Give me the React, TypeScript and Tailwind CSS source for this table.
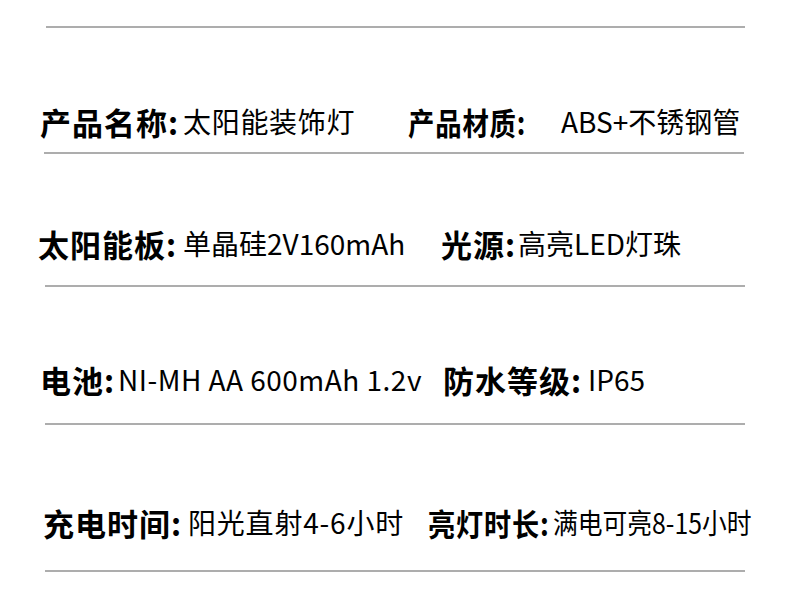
import React from 'react';

interface Spec {
  label: string;
  value: string;
  labelW: string;
  labelCls?: string;
  valueCls: string;
}

interface Row {
  left: Spec;
  right: Spec;
  pad: string;
  leftW: string;
  top: string;
  line: string;
}

const font = { fontFamily: '"Noto Sans CJK SC", "Noto Sans", sans-serif' };

const Item: React.FC<{ spec: Spec; className?: string }> = ({ spec, className }) => (
  <div className={`flex items-center whitespace-nowrap text-black shrink-0 ${className ?? ''}`}>
    <span className={`text-[31px] font-bold leading-none tracking-[1px] shrink-0 ${spec.labelW}`}>
      <span className={`inline-block origin-left ${spec.labelCls ?? ''}`}>{spec.label}</span>
    </span>
    <span className={`text-[28px] leading-none font-normal inline-block ${spec.valueCls}`}>{spec.value}</span>
  </div>
);

export default function App() {
  const rows: Row[] = [
    {
      left: { label: '产品名称:', value: '太阳能装饰灯', labelW: 'w-[143px]', valueCls: 'tracking-[0.7px]' },
      right: {
        label: '产品材质:',
        value: 'ABS+不锈钢管',
        labelW: 'w-[153px]',
        labelCls: 'scale-x-[0.85]',
        valueCls: '',
      },
      pad: 'pl-[40px]',
      leftW: 'w-[368px]',
      top: 'mt-[73px]',
      line: 'mt-[11px] ml-[44px]',
    },
    {
      left: { label: '太阳能板:', value: '单晶硅2V160mAh', labelW: 'w-[145px]', valueCls: '' },
      right: { label: '光源:', value: '高亮LED灯珠', labelW: 'w-[77px]', valueCls: '' },
      pad: 'pl-[38px]',
      leftW: 'w-[403px]',
      top: 'mt-[69px]',
      line: 'mt-[22px] ml-[45px]',
    },
    {
      left: { label: '电池:', value: 'NI-MH AA 600mAh 1.2v', labelW: 'w-[78px]', valueCls: 'tracking-[0.5px]' },
      right: { label: '防水等级:', value: 'IP65', labelW: 'w-[145px]', valueCls: '' },
      pad: 'pl-[40px]',
      leftW: 'w-[403px]',
      top: 'mt-[72px]',
      line: 'mt-[24px] ml-[45px]',
    },
    {
      left: { label: '充电时间:', value: '阳光直射4-6小时', labelW: 'w-[145px]', valueCls: 'tracking-[0.8px]' },
      right: {
        label: '亮灯时长:',
        value: '满电可亮8-15小时',
        labelW: 'w-[125px]',
        labelCls: 'scale-x-[0.875]',
        valueCls: 'scale-x-[0.885] origin-left',
      },
      pad: 'pl-[43px]',
      leftW: 'w-[385px]',
      top: 'mt-[77px]',
      line: 'mt-[28px] ml-[45px]',
    },
  ];

  return (
    <div className="w-[790px] h-[613px] bg-white overflow-hidden pt-[26px]" style={font}>
      <div className="h-[2px] w-[699px] ml-[46px] bg-[#adadad]" />
      {rows.map((row, i) => (
        <React.Fragment key={i}>
          <div className={`h-[40px] flex items-center ${row.pad} ${row.top}`}>
            <Item spec={row.left} className={row.leftW} />
            <Item spec={row.right} />
          </div>
          <div className={`h-[2px] w-[700px] bg-[#adadad] ${row.line}`} />
        </React.Fragment>
      ))}
    </div>
  );
}
